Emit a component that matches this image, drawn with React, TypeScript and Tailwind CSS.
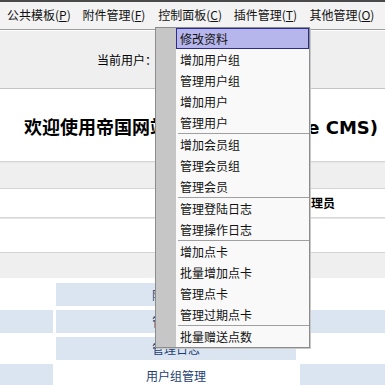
import React from "react";

const FONT = { fontFamily: '"Noto Sans CJK SC", "Noto Sans", sans-serif' };

const topMenus = [
  ["公共模板", "P"],
  ["附件管理", "F"],
  ["控制面板", "C"],
  ["插件管理", "T"],
  ["其他管理", "O"],
];

const groups: string[][] = [
  ["修改资料", "增加用户组", "管理用户组", "增加用户", "管理用户"],
  ["增加会员组", "管理会员组", "管理会员"],
  ["管理登陆日志", "管理操作日志"],
  ["增加点卡", "批量增加点卡", "管理点卡", "管理过期点卡"],
  ["批量赠送点数"],
];

function Row({
  left,
  mid,
  right,
  text,
}: {
  left: boolean;
  mid: boolean;
  right: boolean;
  text: string;
}) {
  const blue = "bg-[#dbe5f1]";
  return (
    <div className="flex h-[23px] gap-[3px]">
      <div className={`w-[53px] ${left ? blue : "bg-white"}`} />
      <div
        className={`w-[240px] flex items-center justify-center text-[12px] leading-none text-[#1d3e74] ${mid ? blue : "bg-white"}`}
      >
        {text}
      </div>
      <div className={`flex-1 ml-[1px] ${right ? blue : "bg-white"}`} />
    </div>
  );
}

export default function App() {
  return (
    <div className="relative w-[385px] h-[385px] overflow-hidden bg-white text-black" style={FONT}>
      {/* top edge */}
      <div className="h-[2px] bg-[#4a4a4a]" />
      {/* menu bar */}
      <div className="h-[27px] bg-[#f3f3f3] flex items-center pl-[7px] pb-[2px]">
        {topMenus.map(([t, k]) => (
          <div key={t} className="w-[78px] text-[12px] leading-none whitespace-nowrap text-[#111]">
            {t}(<span className="underline">{k}</span>)
          </div>
        ))}
      </div>
      <div className="h-[1px] bg-[#9c9c9c]" />
      <div className="h-[1px] bg-[#ffffff]" />
      {/* user bar */}
      <div className="h-[57px] bg-[#efefef] flex items-center pl-[97px] text-[12px] leading-none">
        当前用户：admin
      </div>
      <div className="h-[1px] bg-[#c4c4c4]" />
      {/* title */}
      <div className="h-[72px] flex items-center justify-center pl-[17px] pt-[6px]">
        <span
          className="text-[18px] font-bold leading-none whitespace-nowrap"
          style={{ fontFamily: '"DejaVu Sans", "Noto Sans CJK SC", sans-serif' }}
        >
          欢迎使用帝国网站管理系统(Empire CMS)
        </span>
      </div>
      <div className="h-[1px] bg-[#d6d6d6]" />
      <div className="h-[1px] bg-[#e6e6e6]" />
      <div className="h-[25px] bg-[#efefef]" />
      <div className="h-[1px] bg-[#d4d4d4]" />
      <div className="h-[28px] flex items-center pl-[275px] text-[12px] font-bold leading-none">
        超级管理员
      </div>
      <div className="h-[1px] bg-[#d6d6d6]" />
      <div className="h-[1px] bg-[#e8e8e8]" />
      <div className="h-[33px] bg-white" />
      <div className="h-[1px] bg-[#d4d4d4]" />
      <div className="h-[25px] bg-[#efefef]" />
      <div className="h-[5px] bg-white" />
      <div className="flex flex-col gap-[4px]">
        <Row left={false} mid={true} right={false} text="附件管理" />
        <Row left={true} mid={true} right={true} text="管理用户" />
        <Row left={false} mid={true} right={false} text="管理日志" />
        <Row left={true} mid={false} right={true} text="用户组管理" />
      </div>

      {/* dropdown menu */}
      <div className="absolute left-[155px] top-[27px] w-[155px] border border-[#8c8c8c] bg-[#f9f9f9] flex shadow-[1px_1px_0_#c8c8c8]">
        <div className="w-[20px] bg-[#c6c6c6]" />
        <div className="flex-1 flex flex-col">
          {groups.map((g, gi) => (
            <React.Fragment key={gi}>
              {gi > 0 && <div className="h-[1px] ml-[2px] bg-[#a0a0a0]" />}
              {g.map((item, ii) => {
                const sel = gi === 0 && ii === 0;
                return (
                  <div
                    key={item}
                    className={`h-[21px] flex items-center text-[12px] leading-none whitespace-nowrap ${
                      sel
                        ? "border border-[#2c2c8c] bg-[#b6b6ec] pl-[3px] text-[#111]"
                        : "pl-[4px] text-[#111]"
                    }`}
                  >
                    {item}
                  </div>
                );
              })}
            </React.Fragment>
          ))}
        </div>
      </div>
    </div>
  );
}
